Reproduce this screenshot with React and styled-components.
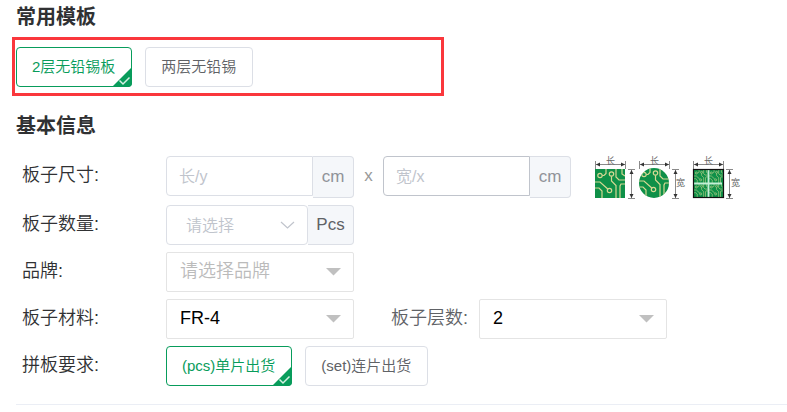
import { useState } from "react";
import styled, { createGlobalStyle } from "styled-components";

const templates = ["2层无铅锡板", "两层无铅锡"];
const deliveries = ["(pcs)单片出货", "(set)连片出货"];

function CheckGroup({ options, label }) {
    const [selected, setSelected] = useState(options[0]);
    return (
        <ButtonGroup role="group" aria-label={label}>
            {options.map((option) => (
                <CheckButton
                    key={option}
                    type="button"
                    $active={option === selected}
                    aria-pressed={option === selected}
                    onClick={() => setSelected(option)}
                >
                    {option}
                    {option === selected && (
                        <Corner width="20" height="20" viewBox="0 0 20 20">
                            <path d="M20 0V20H0Z" fill="#089c5b" />
                            <path
                                d="M7.5 13.5L11 17L17.5 10.5"
                                fill="none"
                                stroke="#d5f0e2"
                                strokeWidth="1.5"
                            />
                        </Corner>
                    )}
                </CheckButton>
            ))}
        </ButtonGroup>
    );
}

function Traces() {
    return (
        <g fill="none" stroke="#d6d893" strokeWidth="1.2">
            <circle cx="5" cy="6.5" r="2.2" />
            <circle cx="16.5" cy="5" r="2.2" />
            <circle cx="14.5" cy="21.5" r="2.2" />
            <path d="M7.2 6.5H9L11 4.5V0" />
            <path d="M16.5 7.2V12L21 16.5V30" />
            <path d="M21 0V8L24 11H30" />
            <path d="M27 0V5L30 7" />
            <path d="M0 13H5L12.8 20" />
            <path d="M0 19H4L7 22V30" />
            <path d="M30 15H26L25 17V30" />
        </g>
    );
}

function Dimensions() {
    return (
        <g>
            <g stroke="#8a8a8a" strokeWidth="1" fill="none">
                <path d="M0.5 5V13M30.5 5V13M1 8.5H30" />
                <path d="M33 13.5H40M33 42.5H40M36.5 14V42" />
            </g>
            <path
                d="M1 8.5L5 6.5V10.5ZM30 8.5L26 6.5V10.5ZM36.5 14L34.5 18H38.5ZM36.5 42L34.5 38H38.5Z"
                fill="#333"
            />
            <SvgText x="11" y="8">长</SvgText>
        </g>
    );
}

function Shapes() {
    return (
        <svg width="148" height="46" viewBox="0 0 148 46" role="img" aria-label="板子尺寸">
            <defs>
                <clipPath id="round">
                    <circle cx="15" cy="15" r="15" />
                </clipPath>
                <clipPath id="tile">
                    <rect width="30" height="29" />
                </clipPath>
            </defs>
            <Dimensions />
            <g transform="translate(0 13)" clipPath="url(#tile)">
                <rect width="30" height="29" fill="#0f9048" />
                <Traces />
            </g>
            <g transform="translate(44 0)">
                <Dimensions />
                <SvgText x="37" y="30">宽</SvgText>
                <g transform="translate(0 12)" clipPath="url(#round)">
                    <rect width="30" height="30" fill="#0f9048" />
                    <Traces />
                </g>
            </g>
            <g transform="translate(98 0)">
                <Dimensions />
                <SvgText x="38" y="30">宽</SvgText>
                <g transform="translate(0 13)">
                    <g clipPath="url(#tile)">
                        <rect width="30" height="29" fill="#0f9048" />
                        <g transform="translate(1 1) scale(0.46)"><Traces /></g>
                        <g transform="translate(16 1) scale(0.46)"><Traces /></g>
                        <g transform="translate(1 15) scale(0.46)"><Traces /></g>
                        <g transform="translate(16 15) scale(0.46)"><Traces /></g>
                    </g>
                    <path d="M15.5 1V28M1 14.5H29" stroke="#c4efd6" strokeWidth="1.8" />
                    <rect x="0.5" y="0.5" width="30" height="28" fill="none" stroke="#111" strokeWidth="1.2" />
                </g>
            </g>
        </svg>
    );
}

function App() {
    return (
        <Page>
            <GlobalStyle />
            <Title>常用模板</Title>
            <Highlight>
                <CheckGroup options={templates} label="常用模板" />
            </Highlight>
            <Title>基本信息</Title>
            <Form>
                <Row>
                    <Label htmlFor="length">板子尺寸:</Label>
                    <Field>
                        <Input id="length" placeholder="长/y" />
                        <Unit>cm</Unit>
                    </Field>
                    <Times>x</Times>
                    <Field>
                        <Input id="width" placeholder="宽/x" aria-label="宽" $dark />
                        <Unit>cm</Unit>
                    </Field>
                    <ShapeBox>
                        <Shapes />
                    </ShapeBox>
                </Row>
                <Row>
                    <Label htmlFor="count">板子数量:</Label>
                    <Field>
                        <SelectBox>
                            <CountSelect id="count" defaultValue="">
                                <option value="">请选择</option>
                                <option>5</option>
                                <option>10</option>
                            </CountSelect>
                            <Arrow width="15" height="8" viewBox="0 0 15 8">
                                <path d="M1 1L7.5 7L14 1" fill="none" stroke="#c0c4cc" strokeWidth="1.2" />
                            </Arrow>
                        </SelectBox>
                        <CountUnit>Pcs</CountUnit>
                    </Field>
                </Row>
                <Row>
                    <Label htmlFor="brand">品牌:</Label>
                    <Field>
                        <SelectBox>
                            <Select id="brand" defaultValue="" $empty>
                                <option value="">请选择品牌</option>
                            </Select>
                            <Arrow width="15" height="8" viewBox="0 0 15 8">
                                <path d="M0 0H15L7.5 7.5Z" fill="#c0c0c0" />
                            </Arrow>
                        </SelectBox>
                    </Field>
                </Row>
                <Row>
                    <Label htmlFor="material">板子材料:</Label>
                    <Field>
                        <SelectBox>
                            <Select id="material">
                                <option>FR-4</option>
                            </Select>
                            <Arrow width="15" height="8" viewBox="0 0 15 8">
                                <path d="M0 0H15L7.5 7.5Z" fill="#c0c0c0" />
                            </Arrow>
                        </SelectBox>
                    </Field>
                    <SideLabel htmlFor="layers">板子层数:</SideLabel>
                    <Field>
                        <SelectBox>
                            <Select id="layers" defaultValue="2">
                                <option>1</option>
                                <option>2</option>
                                <option>4</option>
                            </Select>
                            <Arrow width="15" height="8" viewBox="0 0 15 8">
                                <path d="M0 0H15L7.5 7.5Z" fill="#c0c0c0" />
                            </Arrow>
                        </SelectBox>
                    </Field>
                </Row>
                <Row>
                    <RowName>拼板要求:</RowName>
                    <CheckGroup options={deliveries} label="拼板要求" />
                </Row>
            </Form>
            <Divider />
        </Page>
    );
}

const GlobalStyle = createGlobalStyle`
    * {
        box-sizing: border-box;
    }
    body {
        margin: 0;
        background: #fff;
    }
    body, button, input, select {
        font-family: "Liberation Sans", "Noto Sans CJK SC", sans-serif;
    }
`;

const Page = styled.main`
    padding: 5px 0 0 12px;
`;

const Title = styled.h2`
    margin: 0 0 8px 4px;
    font-size: 20px;
    line-height: 24px;
    font-weight: 700;
    color: #303133;
`;

const Highlight = styled.div`
    max-width: 432px;
    margin-bottom: 18px;
    padding: 7px 1px 6px;
    border: 3px solid #fa373c;
`;

const ButtonGroup = styled.div`
    display: flex;
    gap: 13px;
`;

const CheckButton = styled.button`
    position: relative;
    height: 40px;
    padding: 0 16px 4px 15px;
    border: 1px solid ${({ $active }) => ($active ? "#089c5b" : "#dcdfe6")};
    border-radius: 4px;
    background: #fff;
    color: ${({ $active }) => ($active ? "#089c5b" : "#606266")};
    font-size: 15px;
    font-weight: 350;
    white-space: nowrap;
    cursor: pointer;
`;

const Corner = styled.svg`
    position: absolute;
    right: -1px;
    bottom: -1px;
    border-bottom-right-radius: 4px;
`;

const Form = styled.form`
    display: flex;
    flex-direction: column;
    gap: 7px;
    padding: 10px 0 18px 10px;
`;

const Row = styled.div`
    display: flex;
    align-items: flex-start;
`;

const Label = styled.label`
    width: 144px;
    flex-shrink: 0;
    font-size: 18px;
    font-weight: 350;
    line-height: 38px;
    color: #303133;
`;

const RowName = styled(Label).attrs({ as: "span" })``;

const SideLabel = styled(Label)`
    width: 88px;
    margin-left: 37px;
    color: #606266;
`;

const Field = styled.div`
    display: flex;
    align-items: flex-start;
    width: 188px;
`;

const Input = styled.input`
    flex: 1;
    min-width: 0;
    height: 40px;
    padding: 2px 12px 0;
    border: 1px solid ${({ $dark }) => ($dark ? "#c0c4cc" : "#dcdfe6")};
    border-radius: 4px 0 0 4px;
    outline: none;
    font-size: 16px;
    color: #606266;
    &::placeholder {
        color: #c0c4cc;
        font-weight: 350;
    }
`;

const Unit = styled.span`
    width: 41px;
    height: 42px;
    border: 1px solid #dcdfe6;
    border-left: none;
    border-radius: 0 4px 4px 0;
    background: #f5f7fa;
    color: #909399;
    font-size: 17px;
    line-height: 40px;
    text-align: center;
`;

const CountUnit = styled(Unit)`
    width: 46px;
    height: 40px;
    color: #606266;
    line-height: 38px;
`;

const Times = styled.span`
    width: 29px;
    font-size: 17px;
    line-height: 40px;
    text-align: center;
    color: #999;
`;

const ShapeBox = styled.div`
    margin-left: 24px;
    height: 42px;
`;

const SvgText = styled.text`
    font-size: 9px;
    fill: #666;
`;

const SelectBox = styled.div`
    position: relative;
    flex: 1;
`;

const Select = styled.select`
    appearance: none;
    display: block;
    width: 100%;
    height: 40px;
    padding: 0 30px 3px 13px;
    border: 1px solid #e4e4e4;
    border-radius: 2px;
    outline: none;
    background: #fff;
    color: ${({ $empty }) => ($empty ? "#bbb" : "#000")};
    font-size: 18px;
    font-weight: ${({ $empty }) => ($empty ? 350 : 400)};
`;

const CountSelect = styled(Select)`
    padding: 0 30px 0 19px;
    border-color: #dcdfe6;
    border-radius: 4px;
    color: #c0c4cc;
    font-size: 16px;
    font-weight: 350;
`;

const Arrow = styled.svg`
    position: absolute;
    right: 13px;
    top: 16px;
    pointer-events: none;
`;

const Divider = styled.hr`
    margin: 0 0 0 4px;
    border: none;
    border-top: 1px solid #ebeef5;
`;

export default App;
